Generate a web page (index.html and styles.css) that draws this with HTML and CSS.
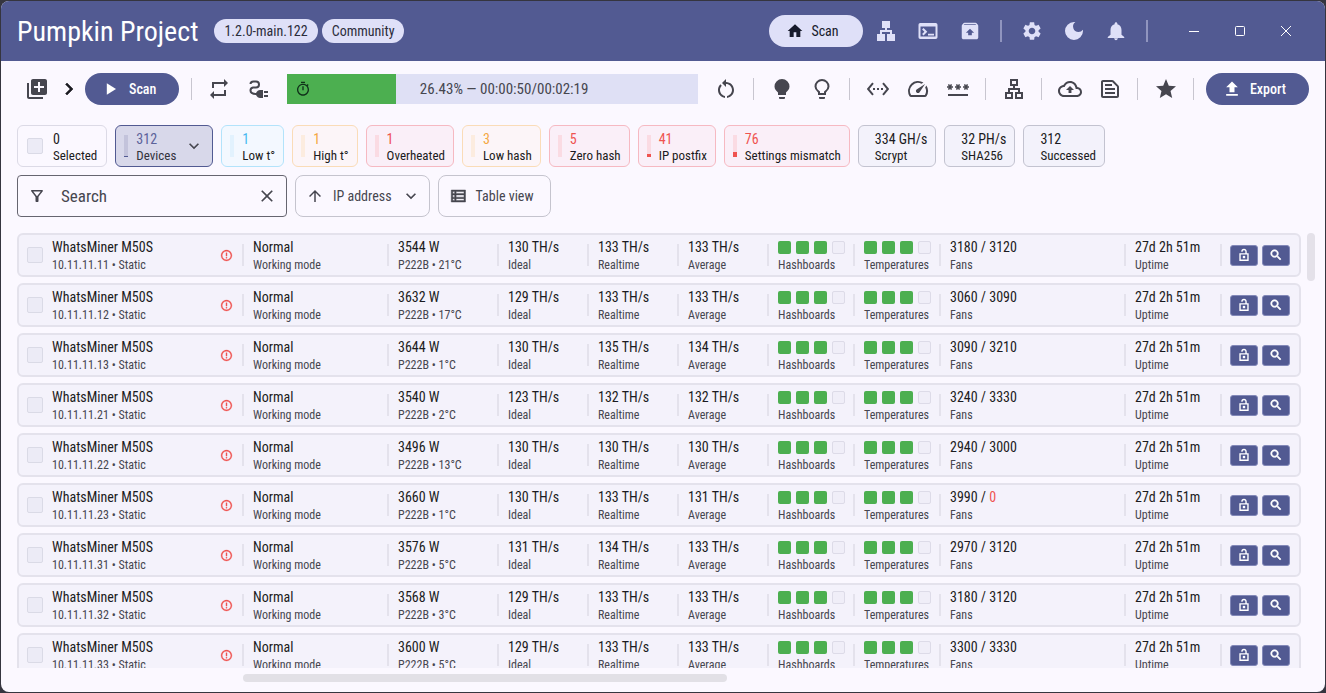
FILE: index.html
```html
<!DOCTYPE html>
<html lang="en">
<head>
<meta charset="utf-8">
<title>Pumpkin Project</title>
<link rel="stylesheet" href="styles.css">
</head>
<body>
<svg class="sprite" aria-hidden="true">
  <symbol id="unlock" viewBox="0 0 24 24"><path d="M5.200 10h13.600v11H5.200zM8.500 6.500V6a3.500 3.500 0 0 1 7 0v4" fill="none" stroke="currentColor" stroke-width="2.400"/><path d="M10 13.500h4v4h-4z"/></symbol>
  <symbol id="magnify" viewBox="0 0 24 24"><path d="M15.500 14h-.790l-.280-.270C15.410 12.590 16 11.110 16 9.500 16 5.910 13.090 3 9.500 3S3 5.910 3 9.500 5.910 16 9.500 16c1.610 0 3.090-.590 4.230-1.570l.270.280v.790l5 4.990L20.490 19l-4.990-5zm-6 0C7.010 14 5 11.990 5 9.500S7.010 5 9.500 5 14 7.010 14 9.500 11.990 14 9.500 14z" stroke="currentColor" stroke-width="1.200"/></symbol>
  <symbol id="alert" viewBox="0 0 24 24"><path d="M11 15h2v2h-2zm0-8h2v6h-2zm.990-5C6.470 2 2 6.480 2 12s4.470 10 9.990 10C17.520 22 22 17.520 22 12S17.520 2 11.990 2zM12 20c-4.420 0-8-3.580-8-8s3.580-8 8-8 8 3.580 8 8-3.580 8-8 8z" stroke="currentColor" stroke-width=".6"/></symbol>
  <symbol id="expand" viewBox="0 0 24 24"><path d="M16.590 8.590L12 13.170 7.410 8.590 6 10l6 6 6-6z"/></symbol>
</svg>
<div class="window">
  <header class="titlebar">
    <h1 class="title">Pumpkin Project</h1>
    <span class="tag">1.2.0-main.122</span>
    <span class="tag">Community</span>
    <nav class="nav">
      <a class="nav-current" href="#scan"><svg class="i16" viewBox="0 0 24 24"><path d="M10 21v-7h4v7h6v-9h3L12 2 1 12h3v9z"/></svg>Scan</a>
      <a class="nav-link" href="#network" aria-label="Network"><svg class="i24" viewBox="0 0 24 24"><path d="M13 22h8v-7h-3v-4h-5V9h3V2H8v7h3v2H6v4H3v7h8v-7H8v-2h8v2h-3z"/></svg></a>
      <a class="nav-link" href="#terminal" aria-label="Terminal"><svg class="i24" viewBox="0 0 24 24"><path d="M19.500 4H4.500C3.100 4 2.500 4.900 2.500 6v12c0 1.100.600 2 2 2h15c1.400 0 2-.900 2-2V6c0-1.100-.600-2-2-2zm0 13.500h-15V7.500h15v10zM18 16.500h-6v-1.800h6v1.800zM7.500 16.500l-1.400-1.400L8.400 12.800 6.100 10.400 7.500 9l3.800 3.800z"/></svg></a>
      <a class="nav-link" href="#archive" aria-label="Archive"><svg class="i22" viewBox="0 0 24 24"><path d="M20.550 5.220l-1.390-1.680C18.880 3.210 18.470 3 18 3H6c-.470 0-.880.210-1.150.550L3.460 5.220C3.170 5.570 3 6.010 3 6.500V19c0 1.100.900 2 2 2h14c1.100 0 2-.900 2-2V6.500c0-.490-.170-.930-.450-1.280zM12 9.500l4.500 4.500H14v2.500h-4V14H7.500zM5.120 5.500l.820-1h12l.930 1z"/></svg></a>
      <i class="rule"></i>
      <a class="nav-link" href="#settings" aria-label="Settings"><svg class="i22" viewBox="0 0 24 24"><path d="M19.140 12.940c.040-.300.060-.610.060-.940 0-.320-.020-.640-.070-.940l2.030-1.580c.180-.140.230-.410.120-.610l-1.920-3.320c-.120-.220-.370-.290-.590-.220l-2.390.960c-.500-.380-1.030-.700-1.620-.940l-.360-2.540c-.040-.240-.240-.410-.480-.410h-3.840c-.240 0-.430.170-.470.410l-.360 2.540c-.590.240-1.130.570-1.620.940l-2.390-.960c-.220-.080-.470 0-.590.220L2.740 8.870c-.120.210-.080.470.120.610l2.030 1.580c-.050.300-.090.630-.090.940s.020.640.070.940l-2.030 1.580c-.180.140-.230.410-.120.610l1.920 3.320c.120.220.370.290.590.220l2.390-.960c.500.380 1.030.700 1.620.940l.360 2.540c.050.240.240.410.480.410h3.840c.240 0 .440-.170.470-.410l.360-2.540c.590-.240 1.130-.560 1.620-.940l2.390.960c.220.080.470 0 .590-.220l1.920-3.320c.120-.220.070-.470-.120-.610l-2.010-1.580zM12 15.600c-1.980 0-3.600-1.620-3.600-3.600s1.620-3.600 3.600-3.600 3.600 1.620 3.600 3.600-1.620 3.600-3.600 3.600z"/></svg></a>
      <button class="nav-link" aria-label="Dark mode"><svg class="i24" viewBox="0 0 24 24"><path d="M12 3a9 9 0 1 0 9 9c0-.46-.04-.92-.1-1.36a5.389 5.389 0 0 1-4.4 2.26 5.403 5.403 0 0 1-3.14-9.8c-.44-.06-.9-.1-1.36-.1z"/></svg></button>
      <button class="nav-link" aria-label="Notifications"><svg class="i22" viewBox="0 0 24 24"><path d="M12 22c1.1 0 2-.9 2-2h-4c0 1.1.89 2 2 2zm6-6v-5c0-3.07-1.64-5.64-4.5-6.32V4c0-.83-.67-1.5-1.5-1.5s-1.5.67-1.5 1.500v.68C7.63 5.36 6 7.92 6 11v5l-3 2.500v1h18v-1z"/></svg></button>
      <i class="rule"></i>
    </nav>
    <div class="window-buttons">
      <button aria-label="Minimize"><svg class="i10" viewBox="0 0 10 10"><path d="M0 5.500h10"/></svg></button>
      <button aria-label="Maximize"><svg class="i10" viewBox="0 0 10 10"><rect x=".5" y=".5" width="9" height="9" rx="1"/></svg></button>
      <button aria-label="Close"><svg class="i10" viewBox="0 0 10 10"><path d="M0 0l10 10M10 0L0 10"/></svg></button>
    </div>
  </header>

  <div class="toolbar">
    <button class="tool" aria-label="Add range"><svg class="i24" viewBox="0 0 24 24"><path d="M4 6H2v14c0 1.1.9 2 2 2h14v-2H4V6zm16-4H8c-1.100 0-2 .900-2 2v12c0 1.100.900 2 2 2h12c1.100 0 2-.900 2-2V4c0-1.100-.900-2-2-2zm-1 9h-4v4h-2v-4H9V9h4V5h2v4h4v2z"/></svg></button>
    <button class="tool tool-narrow" aria-label="Expand"><svg class="i24" viewBox="0 0 24 24"><path d="M10 6L8.590 7.410 13.170 12l-4.580 4.590L10 18l6-6z" stroke="currentColor" stroke-width=".6"/></svg></button>
    <button class="filled"><svg class="i20" viewBox="0 0 24 24"><path d="M7 5v14l11-7z"/></svg>Scan</button>
    <i class="rule"></i>
    <button class="tool" aria-label="Repeat"><svg class="i24" viewBox="0 0 24 24"><path d="M7 7h10v3l4-4-4-4v3H5v6h2V7zm10 10H7v-3l-4 4 4 4v-3h12v-6h-2v4z"/></svg></button>
    <button class="tool" aria-label="Power"><svg class="i24" viewBox="0 0 24 24"><path d="M3.500 7C3.500 5 5 4.500 6.500 4.500h2.500a3 3 0 0 1 0 6H6a3 3 0 0 0-2.500 3c0 2.500 2 3.500 6 3.500" fill="none" stroke="currentColor" stroke-width="2"/><path d="M9 16c1-2 2.500-3 4-3h3v8h-3c-1.500 0-3-1-4-3zM17 14h4v2h-4zM17 18h4v2h-4z"/></svg></button>
    <div class="progress" role="progressbar" aria-label="Scan progress" aria-valuenow="26" aria-valuemin="0" aria-valuemax="100">
      <div class="progress-fill" style="width:26.43%"><svg class="i16" viewBox="0 0 24 24"><path d="M15 1H9v2h6V1zm-4 13h2V8h-2v6zm8.030-6.610l1.420-1.420c-.430-.510-.900-.990-1.410-1.410l-1.420 1.420C16.070 4.740 14.120 4 12 4c-4.970 0-9 4.030-9 9s4.020 9 9 9 9-4.030 9-9c0-2.120-.740-4.070-1.970-5.610zM12 20c-3.870 0-7-3.130-7-7s3.130-7 7-7 7 3.130 7 7-3.130 7-7 7z"/></svg></div>
      <span class="progress-text">26.43% — 00:00:50/00:02:19</span>
    </div>
    <button class="tool" aria-label="Restart"><svg class="i24" viewBox="0 0 24 24"><path d="M12 5V2L8 6l4 4V7c3.310 0 6 2.690 6 6 0 2.970-2.170 5.430-5 5.910v2.020c3.950-.490 7-3.850 7-7.930 0-4.420-3.580-8-8-8zm-6 8c0-1.650.670-3.150 1.760-4.240L6.340 7.340C4.900 8.790 4 10.790 4 13c0 4.080 3.050 7.440 7 7.930v-2.020c-2.830-.480-5-2.940-5-5.910z"/></svg></button>
    <i class="rule"></i>
    <button class="tool" aria-label="Light on"><svg class="i24" viewBox="0 0 24 24"><path d="M12 2a7.500 7.500 0 0 0-7.500 7.500c0 3 2 4.500 3.500 6V18h8v-2.500c1.500-1.500 3.500-3 3.500-6A7.500 7.500 0 0 0 12 2zM9 20v1a1 1 0 0 0 1 1h4a1 1 0 0 0 1-1v-1z"/></svg></button>
    <button class="tool" aria-label="Light off"><svg class="i24" viewBox="0 0 24 24"><path d="M12 3a6.500 6.500 0 0 0-6.500 6.500c0 3 2 4.200 3.500 5.500v2h6v-2c1.500-1.300 3.500-2.500 3.500-5.500A6.500 6.500 0 0 0 12 3z" fill="none" stroke="currentColor" stroke-width="2"/><path d="M9 20v1a1 1 0 0 0 1 1h4a1 1 0 0 0 1-1v-1z"/></svg></button>
    <i class="rule"></i>
    <button class="tool" aria-label="Network settings"><svg class="i24" viewBox="0 0 24 24"><path d="M7.770 6.760L6.230 5.480.820 12l5.410 6.520 1.540-1.280L3.420 12l4.350-5.240zM7 13h2v-2H7v2zm10-2h-2v2h2v-2zm-6 2h2v-2h-2v2zm6.770-7.520l-1.540 1.280L20.580 12l-4.350 5.240 1.540 1.280L23.180 12l-5.410-6.520z"/></svg></button>
    <button class="tool" aria-label="Performance"><svg class="i24" viewBox="0 0 24 24"><path d="M20.380 8.570l-1.230 1.850a8 8 0 0 1-.220 7.580H5.070A8 8 0 0 1 15.580 6.850l1.850-1.230A10 10 0 0 0 3.350 19a2 2 0 0 0 1.720 1h13.850a2 2 0 0 0 1.740-1 10 10 0 0 0-.270-10.440zm-9.790 6.840a2 2 0 0 0 2.830 0l5.660-8.490-8.490 5.660a2 2 0 0 0 0 2.830z"/></svg></button>
    <button class="tool" aria-label="Passwords"><svg class="i24" viewBox="0 0 24 24"><path d="M2 17h20v2H2v-2zm1.150-4.050L4 11.470l.85 1.480 1.300-.750-.850-1.480H7v-1.500H5.300l.850-1.470L4.850 7 4 8.470 3.150 7l-1.300.750.850 1.470H1v1.500h1.700l-.850 1.480zM9.850 12.200l1.300.750.850-1.480.850 1.480 1.300-.750-.850-1.480H15v-1.500h-1.700l.850-1.470-1.300-.750L12 8.470 11.150 7l-1.300.750.850 1.470H9v1.500h1.700zM23 9.220h-1.700l.850-1.470-1.300-.750L20 8.470 19.150 7l-1.300.750.850 1.470H17v1.500h1.700l-.850 1.480 1.300.750.850-1.480.850 1.480 1.300-.750-.850-1.480H23z"/></svg></button>
    <i class="rule"></i>
    <button class="tool" aria-label="Topology"><svg class="i24" viewBox="0 0 24 24"><path d="M13 22h8v-7h-3v-4h-5V9h3V2H8v7h3v2H6v4H3v7h8v-7H8v-2h8v2h-3v7zM10 7V4h4v3h-4zM9 17v3H5v-3h4zm10 0v3h-4v-3h4z"/></svg></button>
    <i class="rule"></i>
    <button class="tool" aria-label="Upload firmware"><svg class="i24" viewBox="0 0 24 24"><path d="M19.350 10.040C18.670 6.590 15.640 4 12 4 9.110 4 6.600 5.640 5.350 8.040 2.340 8.360 0 10.910 0 14c0 3.310 2.690 6 6 6h13c2.760 0 5-2.240 5-5 0-2.640-2.050-4.780-4.650-4.960zM19 18H6c-2.210 0-4-1.790-4-4 0-2.050 1.530-3.760 3.560-3.970l1.070-.110.500-.950C8.080 7.140 9.940 6 12 6c2.620 0 4.880 1.860 5.390 4.430l.300 1.500 1.530.110c1.560.100 2.780 1.410 2.780 2.960 0 1.650-1.350 3-3 3zM8 13h2.550v3h2.900v-3H16l-4-4z"/></svg></button>
    <button class="tool" aria-label="Logs"><svg class="i24" viewBox="0 0 24 24"><path d="M14.170 5L19 9.830V19H5V5h9.170m0-2H5c-1.100 0-2 .900-2 2v14c0 1.100.900 2 2 2h14c1.100 0 2-.900 2-2V9.830c0-.530-.210-1.040-.590-1.410l-4.830-4.830c-.370-.380-.880-.590-1.410-.590zM7 15h10v2H7v-2zm0-4h10v2H7v-2zm0-4h7v2H7V7z"/></svg></button>
    <i class="rule"></i>
    <button class="tool" aria-label="Favorites"><svg class="i24" viewBox="0 0 24 24"><path d="M12 17.270L18.180 21l-1.640-7.030L22 9.240l-7.190-.610L12 2 9.190 8.630 2 9.240l5.460 4.730L5.820 21z"/></svg></button>
    <i class="rule"></i>
    <button class="filled"><svg class="i20" viewBox="0 0 24 24"><path d="M5 20h14v-2H5v2zm0-10h4v6h6v-6h4l-7-7-7 7z"/></svg>Export</button>
  </div>

  <section class="stats" aria-label="Summary">
    <label class="stat stat-selected"><input class="check" type="checkbox"><span class="pair"><span class="value">0</span><span class="caption">Selected</span></span></label>
    <button class="stat stat-devices"><i class="meter"><i class="level level-low"></i></i><span class="pair"><span class="value">312</span><span class="caption">Devices</span></span><svg class="i20" viewBox="0 0 24 24"><use href="#expand"/></svg></button>
    <button class="stat stat-cold"><i class="meter"></i><span class="pair"><span class="value">1</span><span class="caption">Low t°</span></span></button>
    <button class="stat stat-warn"><i class="meter"></i><span class="pair"><span class="value">1</span><span class="caption">High t°</span></span></button>
    <button class="stat stat-bad"><i class="meter"></i><span class="pair"><span class="value">1</span><span class="caption">Overheated</span></span></button>
    <button class="stat stat-warn"><i class="meter"></i><span class="pair"><span class="value">3</span><span class="caption">Low hash</span></span></button>
    <button class="stat stat-bad"><i class="meter"></i><span class="pair"><span class="value">5</span><span class="caption">Zero hash</span></span></button>
    <button class="stat stat-bad"><i class="meter"><i class="level level-mid"></i></i><span class="pair"><span class="value">41</span><span class="caption">IP postfix</span></span></button>
    <button class="stat stat-bad"><i class="meter"><i class="level level-high"></i></i><span class="pair"><span class="value">76</span><span class="caption">Settings mismatch</span></span></button>
    <div class="stat stat-plain"><span class="pair"><span class="value">334 GH/s</span><span class="caption">Scrypt</span></span></div>
    <div class="stat stat-plain"><span class="pair"><span class="value">32 PH/s</span><span class="caption">SHA256</span></span></div>
    <div class="stat stat-plain"><span class="pair"><span class="value">312</span><span class="caption">Successed</span></span></div>
  </section>

  <div class="filters">
    <div class="search">
      <svg class="i18" viewBox="0 0 24 24"><path d="M7 6h10l-5.010 6.300L7 6zm-2.750-.390C6.270 8.200 10 13 10 13v6c0 .550.450 1 1 1h2c.550 0 1-.450 1-1v-6s3.720-4.800 5.740-7.390A.998.998 0 0 0 18.950 4H5.040c-.830 0-1.300.950-.790 1.610z"/></svg>
      <input class="search-input" type="text" placeholder="Search" aria-label="Search">
      <button class="clear" aria-label="Clear"><svg class="i20" viewBox="0 0 24 24"><path d="M19 6.410L17.590 5 12 10.590 6.410 5 5 6.410 10.590 12 5 17.590 6.410 19 12 13.410 17.590 19 19 17.590 13.410 12z"/></svg></button>
    </div>
    <button class="outlined outlined-menu"><svg class="i18" viewBox="0 0 24 24"><path d="M4 12l1.410 1.410L11 7.830V20h2V7.830l5.580 5.590L20 12l-8-8-8 8z"/></svg>IP address<svg class="i20" viewBox="0 0 24 24"><use href="#expand"/></svg></button>
    <button class="outlined"><svg class="i18" viewBox="0 0 24 24"><path d="M3 4h19v16H3zm2 2v2.500h2.500V6zm4.500 0v2.500H20V6zM5 10.500v3h2.500v-3zm4.500 0v3H20v-3zM5 15.500V18h2.500v-2.500zm4.500 0V18H20v-2.500z" fill-rule="evenodd" stroke="currentColor" stroke-width=".6"/></svg>Table view</button>
  </div>

  <main class="list-area">
    <ul class="list" id="devices"></ul>
    <div class="track-y"><div class="thumb-y"></div></div>
    <div class="track-x"><div class="thumb-x"></div></div>
  </main>
</div>
<script src="devices.js"></script>
</body>
</html>
```
FILE: styles.css
```css
* { box-sizing: border-box; }

body {
  margin: 0;
  height: 100vh;
  padding: 1px;
  background: #35353f;
  color: #1b1b21;
  font: 14px/18px "Roboto Condensed", "Liberation Sans", sans-serif;
}

button, input { font: inherit; color: inherit; margin: 0; }
button { padding: 0; border: 0; background: none; }
a { color: inherit; text-decoration: none; }
svg { display: block; flex: none; fill: currentColor; }

.sprite { position: absolute; width: 0; height: 0; }
.i10 { width: 10px; height: 10px; fill: none; stroke: currentColor; }
.i16 { width: 16px; height: 16px; }
.i18 { width: 18px; height: 18px; }
.i20 { width: 20px; height: 20px; }
.i22 { width: 22px; height: 22px; }
.i24 { width: 24px; height: 24px; }

.window {
  display: flex;
  flex-direction: column;
  height: 100%;
  overflow: hidden;
  border-radius: 8px;
  background: #fbf8ff;
}

/* Title bar */
.titlebar {
  display: flex;
  align-items: center;
  gap: 4px;
  height: 60px;
  padding: 0 16px;
  background: #525a92;
  color: #dfe0f8;
}
.title {
  margin: 0 12px 0 0;
  padding-top: 2px;
  color: #fff;
  font-size: 28px;
  font-weight: 400;
  line-height: 36px;
}
.tag {
  padding: 3px 10px;
  border-radius: 12px;
  background: #dfe0f8;
  color: #2c2d3b;
}
.nav { display: flex; align-items: center; margin-left: auto; }
.nav-current {
  display: flex;
  align-items: center;
  justify-content: center;
  gap: 8px;
  width: 94px;
  height: 32px;
  margin-right: 2px;
  padding-right: 6px;
  border-radius: 16px;
  background: #dfe0f8;
  color: #171a2c;
}
.nav-link { display: grid; place-items: center; width: 42px; height: 42px; }
.rule { width: 16px; height: 22px; flex: none; display: grid; justify-content: center; }
.rule::before { content: ""; width: 1px; background: #c8c6d0; }
.nav .rule { width: 20px; }
.nav .rule::before { background: #9095bf; width: 2px; }
.window-buttons { display: flex; margin-left: 10px; color: #fff; }
.window-buttons button { display: grid; place-items: center; width: 46px; height: 32px; }

/* Toolbar */
.toolbar {
  display: flex;
  align-items: center;
  height: 56px;
  padding: 0 16px;
  color: #46464f;
}
.tool { display: grid; place-items: center; width: 40px; height: 40px; flex: none; }
.tool-narrow { width: 24px; color: #1b1b21; }
.filled {
  display: flex;
  align-items: center;
  gap: 8px;
  height: 32px;
  margin: 0 4px;
  padding: 0 23px 0 16px;
  border-radius: 16px;
  background: #525a92;
  color: #fff;
  font-weight: 500;
}
.toolbar .filled:last-child { margin-right: 0; }
.progress {
  display: flex;
  align-items: center;
  flex: 1;
  height: 30px;
  margin: 0 8px;
  background: #dfe0f5;
}
.progress-fill {
  display: flex;
  align-items: center;
  flex: none;
  height: 100%;
  padding-left: 8px;
  background: #4caf50;
  color: #10301a;
}
.progress-text { padding-left: 24px; font-size: 15px; white-space: nowrap; }

/* Summary chips */
.stats { display: flex; gap: 8px; padding: 8px 16px; }
.stat {
  display: flex;
  align-items: center;
  height: 42px;
  padding: 0 8px;
  border: 1px solid #dcdae6;
  border-radius: 6px;
  text-align: left;
}
.stat-selected { gap: 10px; padding: 0 9px; }
.pair { display: flex; flex-direction: column; padding-top: 1px; white-space: nowrap; }
.caption { font-size: 13px; line-height: 16px; }
.meter {
  display: flex;
  flex-direction: column;
  justify-content: flex-end;
  width: 4px;
  height: 22px;
  margin-right: 8px;
  background: #c3c3db;
}
.level { background: currentColor; }
.level-low { height: 1px; background: #525a92; }
.level-mid { height: 3px; }
.level-high { height: 5px; }
.stat-devices { background: #d8d8ea; border-color: #525a92; color: #46464f; }
.stat-devices .pair { margin-right: 8px; }
.stat-devices .value { color: #5c629a; }
.stat-devices .caption { color: #33333d; }
.stat-cold { background: #f3f8ff; border-color: #b3e3fb; color: #45b8f0; }
.stat-cold .meter { background: #e2f2fe; }
.stat-warn { background: #fcf5f8; border-color: #fadcb8; color: #f5a742; }
.stat-warn .meter { background: #fcecdf; }
.stat-bad { background: #faeff8; border-color: #f6b9c2; color: #ef5350; }
.stat-bad .meter { background: #fadbe3; }
.stat-cold .caption, .stat-warn .caption, .stat-bad .caption { color: #1b1b21; }
.stat-plain { padding-left: 16px; background: #f3f2fb; border-color: #c3c3d0; }

.check {
  appearance: none;
  flex: none;
  width: 16px;
  height: 16px;
  margin: 0;
  border: 1px solid #dadae6;
  border-radius: 2px;
  background: #ecebf6;
}

/* Search and view controls */
.filters { display: flex; gap: 8px; padding: 0 16px; }
.search {
  display: flex;
  align-items: center;
  width: 270px;
  height: 42px;
  padding: 0 9px 0 10px;
  border: 1px solid #666570;
  border-radius: 4px;
  color: #46464f;
}
.search-input {
  flex: 1;
  min-width: 0;
  padding: 0 0 0 15px;
  border: 0;
  outline: 0;
  background: none;
  font-size: 17px;
  line-height: 24px;
}
.search-input::placeholder { color: #46464f; opacity: 1; }
.outlined {
  display: flex;
  align-items: center;
  gap: 9px;
  height: 42px;
  padding: 0 16px 0 10px;
  border: 1px solid #c5c4ce;
  border-radius: 8px;
  color: #46464f;
}
.outlined-menu { padding-right: 8px; }

/* Device list */
.list-area {
  display: grid;
  grid-template: minmax(0, 1fr) 24px / minmax(0, 1fr) 24px;
  flex: 1;
  min-height: 0;
  padding: 16px 0 0 16px;
}
.list {
  display: flex;
  flex-direction: column;
  gap: 6px;
  margin: 0;
  padding: 0;
  overflow: hidden;
  list-style: none;
}
.device {
  display: grid;
  grid-template-columns: 223px 145px 110px 90px 90px 90px 86px 86px 1fr 96px 79px;
  align-items: center;
  flex: none;
  height: 44px;
  border: 2px solid #e4e2ec;
  border-radius: 6px;
  background: #f4f2fb;
}
.cell {
  display: flex;
  align-items: center;
  height: 22px;
  padding-left: 9px;
  border-left: 2px solid #e4e2ec;
  white-space: nowrap;
}
.cell .pair { padding-top: 2px; }
.cell-name { gap: 9px; border-left: 0; padding: 0 9px 0 8px; }
.cell-name .alert { margin-left: auto; color: #ef5350; }
.alert { width: 13px; height: 13px; }
.note { font-size: 12px; color: #46464f; }
.fault { color: #ef5350; }
.boards { display: flex; gap: 5px; height: 18px; align-items: center; }
.board { width: 13px; height: 13px; border-radius: 2px; background: #4caf50; }
.board-empty { background: #f0eef8; border: 1px solid #dddbe8; }
.actions { gap: 4px; padding-left: 8px; }
.action {
  display: grid;
  place-items: center;
  width: 28px;
  height: 21px;
  border: 1px solid #8288b8;
  border-radius: 3px;
  background: #525a92;
  color: #fff;
}
.action svg { width: 14px; height: 14px; }

.track-y { padding-left: 6px; }
.thumb-y { width: 8px; height: 48px; border-radius: 4px; background: #e4e1e9; }
.track-x { display: flex; align-items: center; padding: 0 574px 4px 226px; }
.thumb-x { flex: 1; height: 8px; border-radius: 4px; background: #e2e0e6; }
```
FILE: devices.js
```js
const devices = [
  ["10.11.11.11", 3544, 21, 130, 133, 133, 3180, 3120],
  ["10.11.11.12", 3632, 17, 129, 133, 133, 3060, 3090],
  ["10.11.11.13", 3644, 1, 130, 135, 134, 3090, 3210],
  ["10.11.11.21", 3540, 2, 123, 132, 132, 3240, 3330],
  ["10.11.11.22", 3496, 13, 130, 130, 130, 2940, 3000],
  ["10.11.11.23", 3660, 1, 130, 133, 131, 3990, 0],
  ["10.11.11.31", 3576, 5, 131, 134, 133, 2970, 3120],
  ["10.11.11.32", 3568, 3, 129, 133, 133, 3180, 3120],
  ["10.11.11.33", 3600, 5, 129, 133, 133, 3300, 3330],
];

const pair = (value, note) =>
  `<span class="pair"><span>${value}</span><span class="note">${note}</span></span>`;
const cell = (value, note) => `<div class="cell">${pair(value, note)}</div>`;
const boards = `<span class="boards">${'<i class="board"></i>'.repeat(3)}<i class="board board-empty"></i></span>`;
const fan = (rpm) => (rpm === 0 ? `<span class="fault">0</span>` : rpm);

document.getElementById("devices").innerHTML = devices
  .map(([ip, watts, temp, ideal, realtime, average, fanA, fanB]) => `
    <li class="device">
      <div class="cell cell-name">
        <input class="check" type="checkbox" aria-label="Select ${ip}">
        ${pair("WhatsMiner M50S", `${ip} • Static`)}
        <svg class="alert"><use href="#alert"/></svg>
      </div>
      ${cell("Normal", "Working mode")}
      ${cell(`${watts} W`, `P222B • ${temp}°C`)}
      ${cell(`${ideal} TH/s`, "Ideal")}
      ${cell(`${realtime} TH/s`, "Realtime")}
      ${cell(`${average} TH/s`, "Average")}
      ${cell(boards, "Hashboards")}
      ${cell(boards, "Temperatures")}
      ${cell(`${fanA} / ${fan(fanB)}`, "Fans")}
      ${cell("27d 2h 51m", "Uptime")}
      <div class="cell actions">
        <button class="action" aria-label="Unlock ${ip}"><svg><use href="#unlock"/></svg></button>
        <button class="action" aria-label="Inspect ${ip}"><svg><use href="#magnify"/></svg></button>
      </div>
    </li>`)
  .join("");
```
